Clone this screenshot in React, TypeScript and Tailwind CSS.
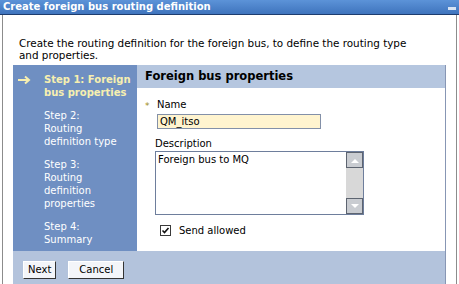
import React from 'react';

const steps = [
  { label: ['Step 1: Foreign', 'bus properties'], current: true },
  { label: ['Step 2:', 'Routing', 'definition type'], current: false },
  { label: ['Step 3:', 'Routing', 'definition', 'properties'], current: false },
  { label: ['Step 4:', 'Summary'], current: false },
];

function Arrow() {
  return (
    <svg width="14" height="10" viewBox="0 0 14 10" className="shrink-0">
      <path d="M1 5h11M8 1.5L12 5 8 8.5" stroke="#f7efb0" strokeWidth="2" fill="none" />
    </svg>
  );
}

function ScrollBtn({ up }: { up: boolean }) {
  return (
    <div className="w-[17px] h-[16px] bg-[#c9ccd1] border border-[#5d6470] flex items-center justify-center">
      <svg width="8" height="5" viewBox="0 0 8 5">
        <path d={up ? 'M0 5L4 1 8 5z' : 'M0 0L4 4 8 0z'} fill="#ffffff" />
      </svg>
    </div>
  );
}

export default function App() {
  return (
    <div
      className="w-[459px] h-[284px] bg-white overflow-hidden flex flex-col text-[10px] text-black"
      style={{ fontFamily: '"DejaVu Sans", Verdana, sans-serif' }}
    >
      {/* Title bar */}
      <div className="h-[15px] shrink-0 bg-gradient-to-b from-[#5c93d8] to-[#3f74bd] border-b border-[#1d3c6e] flex items-center justify-between pl-[3px] pr-[3px]">
        <span className="text-white font-bold text-[10px] leading-none">
          Create foreign bus routing definition
        </span>
        <div className="w-[8px] h-[3px] bg-[#d7e4f4] mt-[2px]" />
      </div>

      <div className="flex-1 flex flex-col ml-[2px] mr-[2px] border-l border-r border-[#8c8c8c] min-h-0">
        {/* Intro */}
        <p className="pt-[22px] pl-[16px] w-[420px] leading-[12px] h-[50px] text-[10.4px]">
          Create the routing definition for the foreign bus, to define the routing type and properties.
        </p>

        {/* Wizard */}
        <div className="ml-[10px] w-[433px] flex-1 flex flex-col border-r border-[#8796b4] min-h-0">
          <div className="h-[186px] flex shrink-0">
            {/* Steps */}
            <div className="w-[124px] bg-[#6f8fc2] pt-[8px] flex flex-col gap-[10px]">
              {steps.map((s, i) => (
                <div key={i} className="flex">
                  <div className="w-[31px] pl-[4px] pt-[2px]">{s.current && <Arrow />}</div>
                  <div
                    className={`leading-[13px] ${
                      s.current ? 'text-[#f7efb0] font-bold' : 'text-white'
                    }`}
                  >
                    {s.label.map((l) => (
                      <div key={l}>{l}</div>
                    ))}
                  </div>
                </div>
              ))}
            </div>

            {/* Content */}
            <div className="flex-1 flex flex-col">
              <div className="h-[23px] bg-[#b5c6df] flex items-center pl-[8px] font-bold text-[11.5px]">
                Foreign bus properties
              </div>
              <div className="pl-[20px] pt-[11px]">
                <div className="flex items-center leading-[12px] relative">
                  <span className="absolute -left-[12px] top-[1px] text-[#a08a20] text-[9px]">*</span>
                  <span>Name</span>
                </div>
                <div className="mt-[3px] w-[164px] h-[15px] bg-[#fff4cf] border border-[#8390a8] flex items-center pl-[2px]">
                  QM_itso
                </div>
                <div className="mt-[9px] leading-[12px] -ml-[2px]">Description</div>
                <div className="mt-[1px] -ml-[2px] w-[209px] h-[64px] border border-[#6e7e9c] flex">
                  <div className="flex-1 pl-[2px] pt-[2px] leading-[12px]">Foreign bus to MQ</div>
                  <div className="w-[17px] bg-[#d8d8d8] flex flex-col justify-between">
                    <ScrollBtn up />
                    <ScrollBtn up={false} />
                  </div>
                </div>
                <div className="mt-[8px] flex items-center">
                  <div className="ml-[3px] w-[11px] h-[11px] border border-[#3a3a3a] bg-white flex items-center justify-center">
                    <svg width="9" height="9" viewBox="0 0 9 9">
                      <path d="M1.5 4.5L3.5 6.5 7.5 2" stroke="#111" strokeWidth="1.6" fill="none" />
                    </svg>
                  </div>
                  <span className="ml-[8px]">Send allowed</span>
                </div>
              </div>
            </div>
          </div>

          {/* Button bar */}
          <div className="flex-1 bg-[#b3c3dc] flex items-start gap-[12px] pl-[10px] pt-[10px]">
            <button className="h-[18px] px-[4px] bg-[#f3f5f9] border border-t-white border-l-white border-r-[#333] border-b-[#333] leading-none">
              Next
            </button>
            <button className="h-[18px] px-[10px] bg-[#f3f5f9] border border-t-white border-l-white border-r-[#333] border-b-[#333] leading-none">
              Cancel
            </button>
          </div>
        </div>
      </div>
    </div>
  );
}
